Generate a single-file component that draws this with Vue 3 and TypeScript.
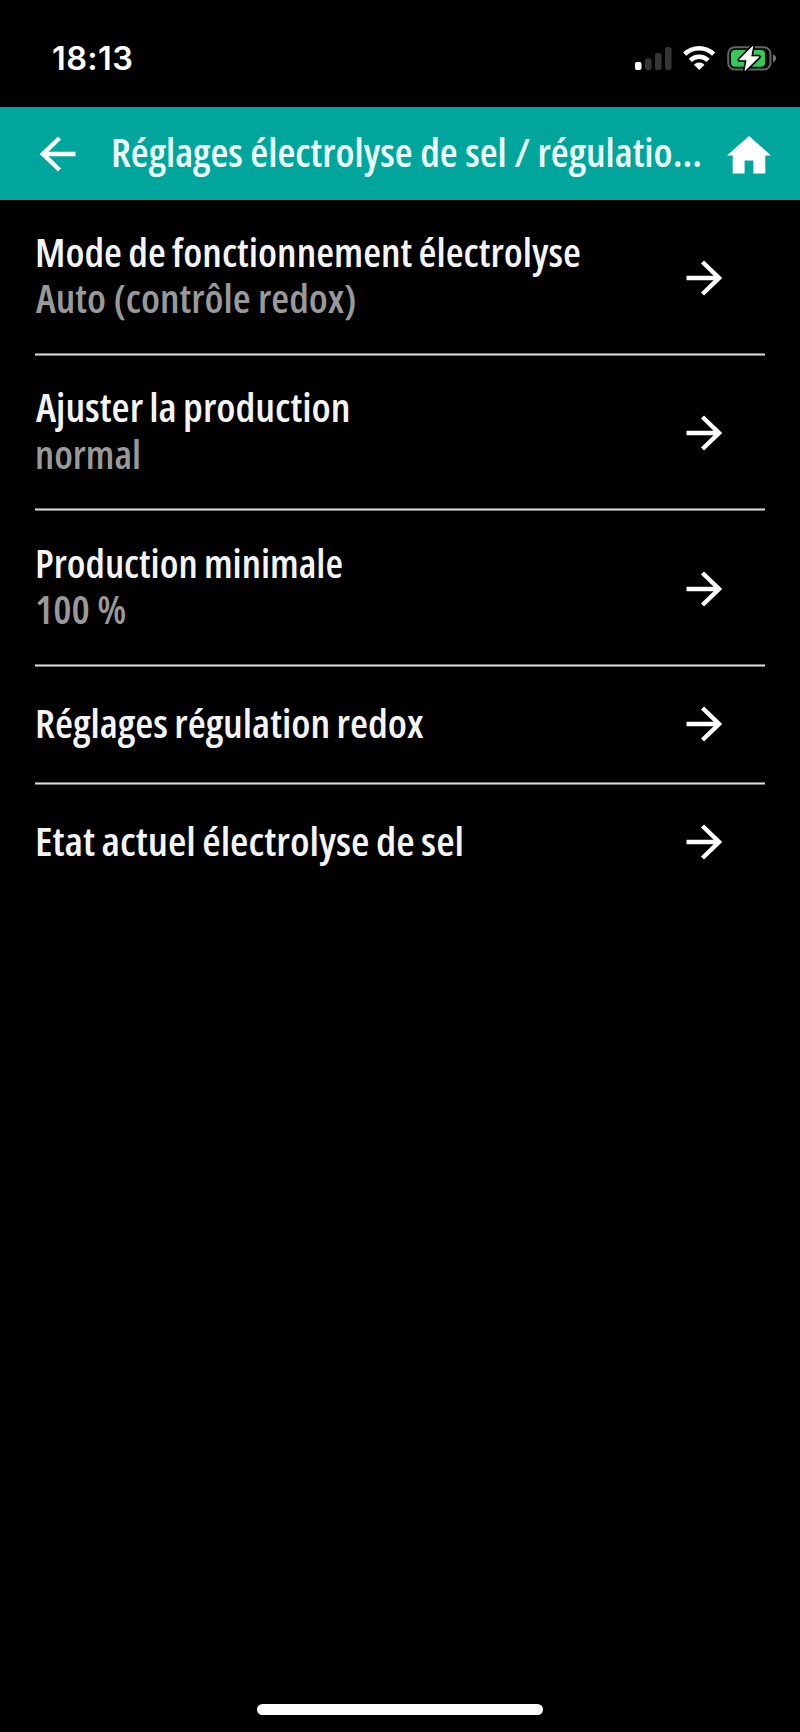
<script setup lang="ts">
import type { Directive } from 'vue'

interface Label {
  text: string
  left: number
  width: number
}
interface Row {
  title: Label
  value?: Label
}

const heading: Label = { text: 'Réglages électrolyse de sel / régulatio...', left: 110.5, width: 591 }

const rows: Row[] = [
  {
    title: { text: 'Mode de fonctionnement électrolyse', left: 34.8, width: 546 },
    value: { text: 'Auto (contrôle redox)', left: 36, width: 320.5 },
  },
  {
    title: { text: 'Ajuster la production', left: 36, width: 314.5 },
    value: { text: 'normal', left: 35.3, width: 106 },
  },
  {
    title: { text: 'Production minimale', left: 34.8, width: 308 },
    value: { text: '100 %', left: 35, width: 91.5 },
  },
  { title: { text: 'Réglages régulation redox', left: 34.8, width: 388.5 } },
  { title: { text: 'Etat actuel électrolyse de sel', left: 34.8, width: 429 } },
]

const vFit: Directive<HTMLElement, Label> = {
  mounted(el, { value }) {
    const scale = value.width / el.getBoundingClientRect().width
    el.style.marginLeft = `${value.left}px`
    el.style.transform = `scaleX(${scale})`
  },
}
</script>

<template>
  <div class="screen">
    <div class="status">
      <span class="time">18:13</span>
      <svg class="indicators" width="144" height="28" viewBox="0 0 144 28">
        <rect x="0" y="17" width="6.5" height="8" rx="2" fill="#fff" />
        <g fill="#353535">
          <rect x="10" y="13.5" width="6.5" height="11.5" rx="2" />
          <rect x="20" y="8" width="6.5" height="17" rx="2" />
          <rect x="30" y="2" width="6.5" height="23" rx="2" />
        </g>
        <g fill="none" stroke="#fff" stroke-width="4.6">
          <path d="M49.7 9.2A20.7 20.7 0 0 1 78.7 9.2" />
          <path d="M55.3 15.3A12.8 12.8 0 0 1 73.1 15.3" />
        </g>
        <path d="M64.2 25L58.9 19.7A7.6 7.6 0 0 1 69.5 19.7Z" fill="#fff" />
        <rect x="93.2" y="2.2" width="42.2" height="22.3" rx="6.5" fill="none" stroke="#666" stroke-width="2" />
        <rect x="96" y="5" width="34" height="16.8" rx="4" fill="#34c759" />
        <path d="M138 9.5Q141 10.5 141 13.3T138 17Z" fill="#777" />
        <path d="M117.8 1.2L104.5 14.8H112L110 25.5L124 11.8H115.8Z" fill="#fff" stroke="#000" stroke-width="4" stroke-linejoin="round" />
        <path d="M117.8 1.2L104.5 14.8H112L110 25.5L124 11.8H115.8Z" fill="#fff" stroke="#fff" stroke-width=".8" stroke-linejoin="round" />
      </svg>
    </div>

    <header class="bar">
      <svg class="back" width="36" height="36" viewBox="0 0 36 36">
        <path d="M35.5 18H3M19.5 2L3 18L19.5 34" />
      </svg>
      <h1 v-fit="heading" class="label">{{ heading.text }}</h1>
      <svg class="home" width="44" height="38" viewBox="0 0 44 38">
        <path d="M22 0L44 19.5H38.3V37.5H26.4V24.5H17.6V37.5H5.7V19.5H0Z" />
      </svg>
    </header>

    <main>
      <div v-for="row in rows" :key="row.title.text" class="row" :class="{ single: !row.value }">
        <div class="texts">
          <div v-fit="row.title" class="label title">{{ row.title.text }}</div>
          <div v-if="row.value" v-fit="row.value" class="label value">{{ row.value.text }}</div>
        </div>
        <svg class="go" width="36" height="36" viewBox="0 0 36 36">
          <path d="M.5 18H33M16.5 2L33 18L16.5 34" />
        </svg>
      </div>
    </main>
    <div class="home-indicator"></div>
  </div>
</template>

<style>
body {
  background: #000;
}
</style>

<style scoped>
.screen {
  width: 800px;
  height: 1732px;
  background: #000;
  display: flex;
  flex-direction: column;
  overflow: hidden;
  font-family: "Open Sans", "Noto Sans", sans-serif;
  color: #f4f4f4;
}
.status {
  flex: none;
  height: 107px;
  box-sizing: border-box;
  padding: 38px 21px 0 52px;
  display: flex;
  justify-content: space-between;
}
.time {
  padding-top: 1px;
  font: 600 32.5px/40px Inter, sans-serif;
  letter-spacing: 0.4px;
  color: #fff;
}
.indicators {
  margin-top: 7px;
}
.bar {
  flex: none;
  display: grid;
  grid-template-columns: 40px 0 1fr 44px;
  align-items: center;
  height: 93px;
  padding-right: 29px;
  background: #00a69c;
}
.back {
  grid-column: 1;
  grid-row: 1;
  margin-left: 40px;
}
.label {
  width: max-content;
  white-space: nowrap;
  font-size: 40.5px;
  line-height: 46.67px;
  font-weight: 630;
  font-stretch: 75%;
  transform-origin: 0 50%;
}
.title {
  word-spacing: -1.2px;
}
h1.label {
  grid-column: 1 / 4;
  grid-row: 1;
  margin: -2px 0 0;
  color: #effffd;
}
.home {
  grid-column: 4;
  margin-top: 2px;
}
.back path,
.go path {
  fill: none;
  stroke: #fff;
  stroke-width: 4.4;
}
.home path {
  fill: #fff;
}
.row {
  display: flex;
  justify-content: space-between;
  align-items: center;
  height: 155.6px;
  background: linear-gradient(#777 0 1px, #ddd 1px 2px, #777 2px) 35px 100% / 730px 3px no-repeat;
}
.row.single {
  height: 117.8px;
}
.row:last-child {
  background: none;
}
.texts {
  width: 600px;
  margin-top: -5px;
}
.value {
  color: #999;
}
.go {
  margin-right: 78px;
}
.single .go {
  margin-bottom: 2.4px;
}
.home-indicator {
  width: 286px;
  height: 11px;
  margin: auto auto 17px 257px;
  border-radius: 6px;
  background: #fff;
}
</style>
